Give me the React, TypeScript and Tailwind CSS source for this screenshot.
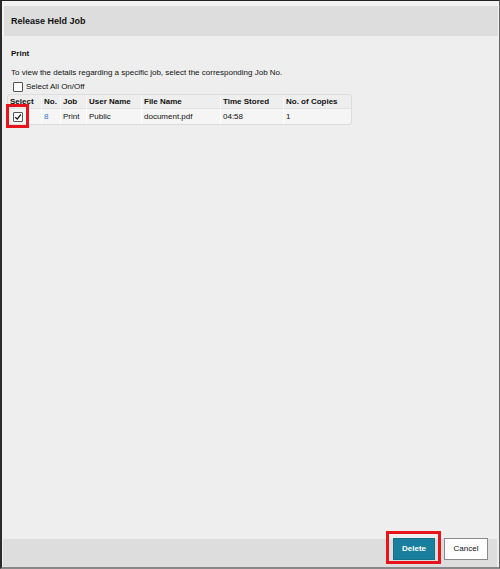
import React from 'react';

const cols = [
  { key: 'select', label: 'Select', w: 'w-[33px]' },
  { key: 'no', label: 'No.', w: 'w-[19px]' },
  { key: 'job', label: 'Job', w: 'w-[26px]' },
  { key: 'user', label: 'User Name', w: 'w-[55px]' },
  { key: 'file', label: 'File Name', w: 'w-[79px]' },
  { key: 'time', label: 'Time Stored', w: 'w-[63px]' },
  { key: 'copies', label: 'No. of Copies', w: 'w-[68px]' },
];

const Box: React.FC<{ checked?: boolean }> = ({ checked }) => (
  <span className="inline-flex items-center justify-center w-[10px] h-[10px] border border-[#555] bg-white rounded-[1px]">
    {checked && (
      <svg viewBox="0 0 10 10" className="w-[8px] h-[8px]">
        <path d="M1.5 5.2 L4 7.6 L8.6 1.8" fill="none" stroke="#111" strokeWidth="1.6" />
      </svg>
    )}
  </span>
);

const App: React.FC = () => {
  return (
    <div
      className="relative w-[500px] h-[569px] flex flex-col bg-[#eeeeee] border-t border-t-[#222] border-l-2 border-l-[#2a2a2a] border-r border-r-[#666] border-b-2 border-b-[#888] text-[#111]"
      style={{ fontFamily: '"Liberation Sans", Arial, sans-serif' }}
    >
      {/* Title bar */}
      <div className="pt-[5px] pl-[2px] pr-[1px] bg-[#f3f3f3]">
        <div className="h-[30px] bg-[#dddddd] flex items-center pl-[7px] pt-[2px] text-[9px] font-bold">
          Release Held Job
        </div>
      </div>

      {/* Body */}
      <div className="flex-1 pl-[7px] pr-[9px]">
        <div className="mt-[13px] pl-[2px] text-[8px] font-bold leading-[10px]">Print</div>
        <div className="mt-[9px] pl-[2px] text-[8px] leading-[10px]">
          To view the details regarding a specific job, select the corresponding Job No.
        </div>
        <div className="mt-[4px] pl-[4px] flex items-center gap-[3px] text-[8px] leading-[10px]">
          <Box />
          <span>Select All On/Off</span>
        </div>

        <table className="mt-[2px] -ml-[2px] border-separate border-spacing-0 text-[8px] border border-[#dcdcdc] rounded-[3px]">
          <thead>
            <tr className="h-[13px]">
              {cols.map((c, i) => (
                <th
                  key={c.key}
                  className={`${c.w} text-left font-bold px-[2px] leading-[10px] ${i > 0 ? 'border-l border-l-[#f8f8f8]' : ''}`}
                >
                  {c.label}
                </th>
              ))}
            </tr>
          </thead>
          <tbody>
            <tr className="h-[16px]">
              <td className="pl-[5px] pr-[2px] bg-[#f5f5f5] border-t border-t-[#e2e2e2] rounded-bl-[3px]">
                <span className="flex pt-[1px]">
                  <Box checked />
                </span>
              </td>
              <td className="px-[2px] bg-[#f5f5f5] border-t border-t-[#e2e2e2] border-l border-l-white text-[#2f74c0]">8</td>
              <td className="px-[2px] bg-[#f5f5f5] border-t border-t-[#e2e2e2] border-l border-l-white">Print</td>
              <td className="px-[2px] bg-[#f5f5f5] border-t border-t-[#e2e2e2] border-l border-l-white">Public</td>
              <td className="px-[2px] bg-[#f5f5f5] border-t border-t-[#e2e2e2] border-l border-l-white">document.pdf</td>
              <td className="px-[2px] bg-[#f5f5f5] border-t border-t-[#e2e2e2] border-l border-l-white">04:58</td>
              <td className="px-[2px] bg-[#f5f5f5] border-t border-t-[#e2e2e2] border-l border-l-white rounded-br-[3px]">1</td>
            </tr>
          </tbody>
        </table>
      </div>

      {/* Footer */}
      <div className="h-[28px] ml-[1px] mr-[2px] bg-[#dddddd] flex items-start justify-end gap-[9px] pr-[9px]">
        <button className="-mt-[1px] w-[42px] h-[22px] bg-[#1a7f9e] text-white text-[8px] font-bold border border-[#16708b]">
          Delete
        </button>
        <button className="-mt-[1px] w-[44px] h-[22px] bg-white text-[#111] text-[8px] border border-[#8a8a8a]">
          Cancel
        </button>
      </div>

      {/* Annotation highlights */}
      <div className="absolute left-[4px] top-[103px] w-[23px] h-[24px] border-[3px] border-[#e8141c]" />
      <div className="absolute left-[384px] top-[530px] w-[55px] h-[33px] border-[3px] border-[#e8141c]" />
    </div>
  );
};

export default App;
